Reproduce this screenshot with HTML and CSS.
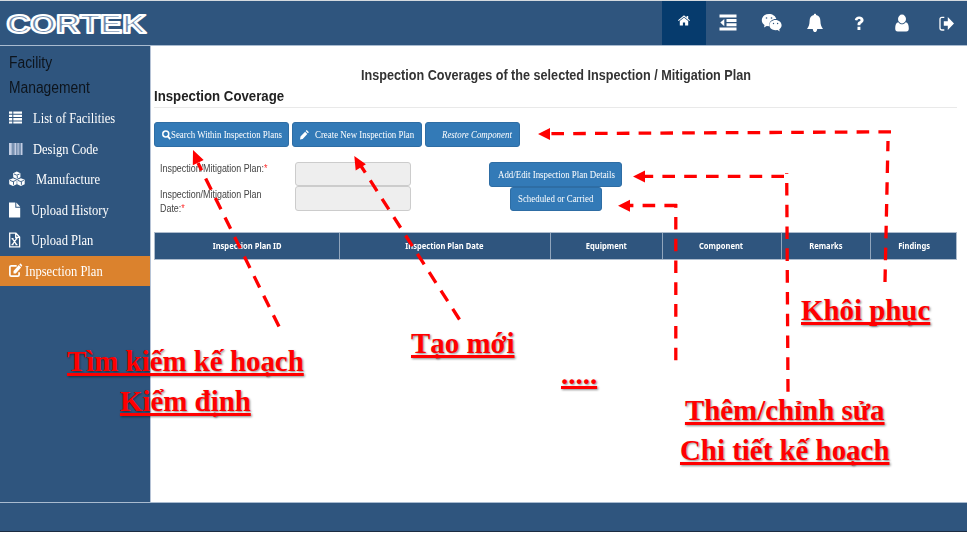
FILE: index.html
```html
<!DOCTYPE html>
<html lang="en">
<head>
<meta charset="utf-8">
<title>Inspection Coverage</title>
<link rel="stylesheet" href="styles.css">
</head>
<body>
<div class="app">
  <header class="topbar">
    <svg class="logo" viewBox="0 0 150 44"><text x="6.500" y="32.200" textLength="139.500" lengthAdjust="spacingAndGlyphs">CORTEK</text></svg>
    <nav class="tools">
      <a class="tool active"><svg viewBox="0 0 44 44"><path d="M16 19.3 22 14.3l2.6 2.1V15h1.6v2.8l1.8 1.5-.7.8L22 15.7l-5.3 4.4z"/><path d="M17.800 20 22 16.600l4.200 3.400v4.500h-3.100v-3h-2.200v3h-3.100z"/></svg></a>
      <a class="tool"><svg viewBox="0 0 44 44"><path d="M13.500 13.500h17v3h-17zM20.500 18h10v2.900h-10zM20.500 22.300h10v2.900h-10zM13.500 26.500h17v3h-17zM18.300 18v7.200l-4-3.600z"/></svg></a>
      <a class="tool"><svg viewBox="0 0 44 44"><path d="M19 13c-4.300 0-7.200 2.800-7.200 6.200 0 2 1 3.600 2.700 4.800L14 26.400l2.700-1.500 2.700.4c-.9-4.200 2.500-7.500 6.900-7.300C25.600 15 22.600 13 19 13z"/><path d="M25.500 18.900c-3.500 0-6.100 2.300-6.100 5.200s2.600 5.200 6.100 5.200l2-.3 2.300 1.500-.6-2.100c1.500-1 2.400-2.500 2.400-4.200 0-2.900-2.700-5.300-6.100-5.300z"/><g class="cut"><circle cx="16.500" cy="17" r=".8"/><circle cx="21.500" cy="17" r=".8"/><circle cx="23.500" cy="22.500" r=".7"/><circle cx="27.600" cy="22.500" r=".7"/></g></svg></a>
      <a class="tool"><svg viewBox="0 0 44 44"><path d="M22 12.800c.8 0 1.200.5 1.100 1.300 3 .6 4.200 3 4.300 5.900.1 3.800.9 5.900 2.600 7.900h-5.800c-.1 1.900-1 3.100-2.200 3.100s-2.100-1.200-2.200-3.100H14c1.700-2 2.500-4.100 2.600-7.900.1-2.900 1.300-5.300 4.300-5.900-.1-.8.300-1.300 1.100-1.300z"/></svg></a>
      <a class="tool"><svg viewBox="0 0 44 44"><path d="M17.800 18.900c.4-2.200 1.900-3.500 4.300-3.500 2.600 0 4.500 1.500 4.500 3.700 0 1.800-1.100 2.600-2.200 3.300-.9.500-1 .9-1 1.800h-2.900c0-2 .4-2.800 1.700-3.600.9-.5 1.300-.8 1.300-1.400 0-.7-.5-1.200-1.400-1.200-.9 0-1.400.5-1.900 1.500zM20.500 25.700h2.900v3.200h-2.900z"/></svg></a>
      <a class="tool"><svg viewBox="0 0 44 44"><ellipse cx="22" cy="18" rx="4" ry="4.400"/><path d="M18.400 21.200c1 1.400 2.200 2.100 3.600 2.100s2.600-.7 3.600-2.100c2.200.3 3.200 2.500 3.200 6.100 0 2.300-.8 3.200-2.500 3.200h-8.600c-1.700 0-2.500-.9-2.500-3.200 0-3.600 1-5.800 3.200-6.100z"/></svg></a>
      <a class="tool"><svg viewBox="0 0 44 44"><path class="line" d="M20.300 16.300h-2.300q-2 0-2 2v8.700q0 2 2 2h2.300"/><path d="M19.800 20.300h4v-4.300l6.200 6.400-6.200 6.600v-4.300h-4z"/></svg></a>
    </nav>
  </header>

  <div class="body">
    <aside class="sidebar">
      <h2><span class="sq">Facility<br>Management</span></h2>
      <ul>
        <li><svg viewBox="0 0 16 16"><path d="M0 1.500h3.300v2.300H0zM4.300 1.500H13v2.300H4.300zM0 4.800h3.300v2.300H0zM4.300 4.800H13v2.300H4.300zM0 8.100h3.300v2.300H0zM4.300 8.100H13v2.300H4.300zM0 11.400h3.300v2H0zM4.300 11.400H13v2H4.300z"/></svg><span class="sq pad-l">List of Facilities</span></li>
        <li><svg viewBox="0 0 16 16"><path class="soft" d="M0 2h2.800v12H0zM3.500 2h1v12h-1zM5.300 2h2.200v12H5.300zM8.300 2h1.500v12H8.300zM10.500 2h1v12h-1zM12 2h1.500v12H12z"/></svg><span class="sq pad-l">Design Code</span></li>
        <li><svg viewBox="0 0 16 16"><g class="cube"><path d="M7.800.500 11.400 2.300v3.900L7.800 8 4.200 6.200V2.300z"/><path d="M4 7.200l3.700 1.600v4.400L4 15 .2 13.200V8.800z"/><path d="M11.900 7.200l3.800 1.600v4.400L11.900 15l-3.700-1.800V8.800z"/></g><path class="seam" d="M5 3l2.800 1.200L10.600 3M8.300 7V4.600M1 9.400l3 1.200 2.900-1.200M4.500 13.800v-2.900M8.900 9.400l3 1.200 2.900-1.200M12.400 13.800v-2.900"/></svg><span class="sq pad-m">Manufacture</span></li>
        <li><svg viewBox="0 0 16 16"><path d="M0 .500h6.300v5.300h4.900V15.500H0zM7.300.500l3.900 4.300H7.300z"/></svg><span class="sq pad-s">Upload History</span></li>
        <li><svg viewBox="0 0 16 16"><path class="line" d="M.7 1.200h6.200l3.700 3.900v9.700H.7zM6.700 1.200v4.200h3.900M3.400 6.700l4.200 6M7.600 6.700l-4.200 6M2.500 6.700h2M6.500 6.700h2M2.500 12.700h2M6.500 12.700h2"/></svg><span class="sq pad-s">Upload Plan</span></li>
        <li class="current"><svg viewBox="0 0 16 16"><path class="line thick" d="M7.700 2.800H2.300Q.9 2.800.9 4.300v7.400q0 1.500 1.400 1.500h6.400q1.400 0 1.400-1.500V9.300"/><path d="M4.500 7.900 9.800 2l2.300 2.500-5.300 6H4.500zM10.300 1.400l.6-.6q.5-.4 1 0l1.100 1.200q.4.500 0 1l-.6.700z"/></svg><span class="sq pad-0">Inpsection Plan</span></li>
      </ul>
    </aside>

    <main class="content">
      <h1><span class="sq">Inspection Coverages of the selected Inspection / Mitigation Plan</span></h1>
      <h3><span class="sq">Inspection Coverage</span></h3>
      <div class="actions">
        <button class="btn search"><svg viewBox="0 0 10 12"><circle class="ring" cx="4.200" cy="4.900" r="3.300"/><path class="handle" d="m6.300 7.300 2.900 3.200"/></svg><span class="sq">Search Within Inspection Plans</span></button>
        <button class="btn create"><svg viewBox="0 0 10 12"><path d="M0 10.500l.5-2.900L5.100 2.700l2.200 2.200-4.600 5zM5.700 2l1-1 2.200 2.300-1 1z"/></svg><span class="sq">Create New Inspection Plan</span></button>
        <button class="btn restore"><span class="sq">Restore Component</span></button>
      </div>
      <form class="form">
        <div class="labels">
          <label><span class="sq">Inspection/Mitigation Plan:<b>*</b></span></label>
          <label><span class="sq">Inspection/Mitigation Plan<br>Date:<b>*</b></span></label>
        </div>
        <div class="fields"><input disabled><input disabled></div>
        <div class="side">
          <button type="button" class="btn details"><span class="sq">Add/Edit Inspection Plan Details</span></button>
          <button type="button" class="btn sched"><span class="sq">Scheduled or Carried</span></button>
        </div>
      </form>
      <div class="grid-head">
        <div><span>Inspection Plan ID</span></div><div><span>Inspection Plan Date</span></div><div><span>Equipment</span></div><div><span>Component</span></div><div><span>Remarks</span></div><div><span>Findings</span></div>
      </div>
    </main>
  </div>
  <footer class="footer"></footer>

  <svg class="arrows" viewBox="0 0 969 534">
    <g class="dash">
      <path d="M279 326.500 198 163"/>
      <path d="M459.500 319.500 361 166"/>
      <path d="M885 282 888 141"/><path d="M891 131.800 549 133.700"/>
      <path d="M788 391.700 786.700 173"/><path d="M784 176.400 645 176.400"/>
      <path d="M675.800 360.300V204"/><path d="M677 205.500H630"/>
    </g>
    <path d="M193 150l-.2 15.200 10.900-5.300zM354.300 156l1.400 14.600 10.200-6.400zM538 134l12-6v12zM633 176.400l12-6v12zM618 205.800l12-6v12z"/>
  </svg>
  <div class="note n-search">Tìm kiếm kế hoạch<br>Kiểm định</div>
  <div class="note n-create">Tạo mới</div>
  <div class="note n-dots">.....</div>
  <div class="note n-restore">Khôi phục</div>
  <div class="note n-details">Thêm/chỉnh sửa<br>Chi tiết kế hoạch</div>
</div>
</body>
</html>
```
FILE: styles.css
```css
* { box-sizing: border-box; }
body { margin: 0; background: #fff; font-family: "Liberation Sans", Arial, sans-serif; overflow: hidden; }
.app { position: relative; width: 967px; height: 532px; display: flex; flex-direction: column; }
h1, h2, h3, ul { margin: 0; padding: 0; font-weight: normal; }
svg { display: block; fill: #fff; flex: none; }

/* Labels are set slightly condensed */
.sq { display: inline-block; white-space: nowrap; transform: scaleX(.865); transform-origin: 0 50%; }

.topbar { height: 46px; flex: none; display: flex; justify-content: space-between; background: #2f557e; border-top: 1px solid #d5dadf; border-bottom: 1px solid #a9bbd0; }
.logo { width: 150px; height: 44px; }
.logo text { font: bold 26px "Liberation Sans", Arial, sans-serif; fill: #6d89ac; stroke: #fff; stroke-width: 2.100px; stroke-linejoin: round; }
.tools { display: flex; }
.tool { width: 43.500px; height: 44px; }
.tool svg { width: 44px; height: 44px; }
.tool.active { background: #063b6d; width: 44px; }
.cut { fill: #2f557e; }
.line { fill: none; stroke: #fff; stroke-width: 1.300; }
.thick { stroke-width: 1.700; }

.body { flex: 1; display: flex; }
.sidebar { width: 151px; background: #2f557e; border-right: 1px solid #b6c3d6; }
.sidebar h2 { height: 57px; padding: 5px 0 0 9px; font-size: 16px; line-height: 24.500px; color: #0d141c; }
.sidebar ul { list-style: none; }
.sidebar li { height: 30.500px; padding: 1px 0 0 9px; display: flex; align-items: center; font: 14.500px "Liberation Serif", "Times New Roman", serif; color: #fff; }
.sidebar li svg { width: 16px; height: 16px; margin-top: -1px; }
.sidebar li.current { background: #db822d; }
.soft { fill: #c3cee4; }
.cube { fill: #fff; }
.seam { fill: none; stroke: #2f557e; stroke-width: .9; }
.pad-l { margin-left: 7.500px; }
.pad-m { margin-left: 11px; }
.pad-s { margin-left: 5.500px; }
.pad-0 { margin-left: 0; }

.content { flex: 1; padding: 20px 10px 0 3px; color: #333; }
.content h1 { height: 19px; padding-left: 207px; font-size: 14.600px; font-weight: bold; line-height: 19px; }
.content h3 { height: 23px; font-size: 15.300px; font-weight: bold; line-height: 22px; color: #222; border-bottom: 1px solid #e9e9e9; }
.actions { display: flex; gap: 3px; margin-top: 14px; }
.btn { height: 25px; padding: 0; display: flex; align-items: center; background: #337ab7; border: 1px solid #2e6da4; border-radius: 3px; color: #fff; font: 10.250px "Liberation Serif", "Times New Roman", serif; overflow: hidden; }
.btn svg { width: 10px; height: 12px; }
.search { width: 135px; padding-left: 7px; }
.search svg { width: 9px; }
.ring { fill: none; stroke: #fff; stroke-width: 1.700; }
.handle { stroke: #fff; stroke-width: 2; }
.create { width: 130px; padding-left: 7px; }
.create .sq { margin-left: 5px; }
.restore { width: 95px; padding-left: 15.500px; font-style: italic; }

.form { display: flex; margin-top: 14px; height: 50px; }
.labels { width: 141px; padding: 1px 0 0 6px; font-size: 10.300px; line-height: 14.500px; color: #444; }
.labels label { display: block; height: 25.500px; }
.labels b { color: #f33; font-weight: normal; }
.fields { width: 116px; padding-top: .5px; display: flex; flex-direction: column; }
.fields input { width: 116px; height: 25px; border: 1px solid #ccc; border-radius: 3px; background: #eee; }
.side { width: 133px; margin-left: 78px; padding-top: 1px; display: flex; flex-direction: column; align-items: center; }
.details { width: 133px; padding-left: 8px; }
.sched { width: 92px; padding-left: 7px; }

.grid-head { display: grid; grid-template-columns: 184.500px 211px 112px 119px 89px 87px; width: 803px; height: 28px; margin-top: 20.500px; border: 1px solid #aebccd; background: #2f557e; color: #fff; font: bold 8.600px "Noto Sans", sans-serif; }
.grid-head div { display: flex; align-items: center; justify-content: center; border-right: 1px solid #91a5bc; }
.grid-head div:last-child { border-right: 0; }
.grid-head span { white-space: nowrap; transform: scaleX(.88); }

.footer { flex: none; height: 30px; background: #2f557e; border-top: 1px solid #a9bbd0; border-bottom: 1px solid #1b2c42; }

/* Annotation layer */
.arrows { position: absolute; left: 0; top: 0; width: 969px; height: 534px; fill: #f00; }
.dash { fill: none; stroke: #f00; stroke-width: 3.300; stroke-dasharray: 12.600 9.200; }
.note { position: absolute; font: bold 28.900px/40px "Liberation Serif", "Times New Roman", serif; color: #f00; text-align: center; white-space: nowrap; text-decoration: underline; text-decoration-thickness: 3px; text-underline-offset: 2px; text-decoration-skip-ink: none; text-shadow: 1px 1px 2px rgba(0, 0, 0, .45); }
.n-search { left: 67px; top: 341px; }
.n-create { left: 411px; top: 323px; }
.n-dots { left: 561px; top: 354px; }
.n-restore { left: 801px; top: 290px; }
.n-details { left: 680px; top: 390px; }
```
